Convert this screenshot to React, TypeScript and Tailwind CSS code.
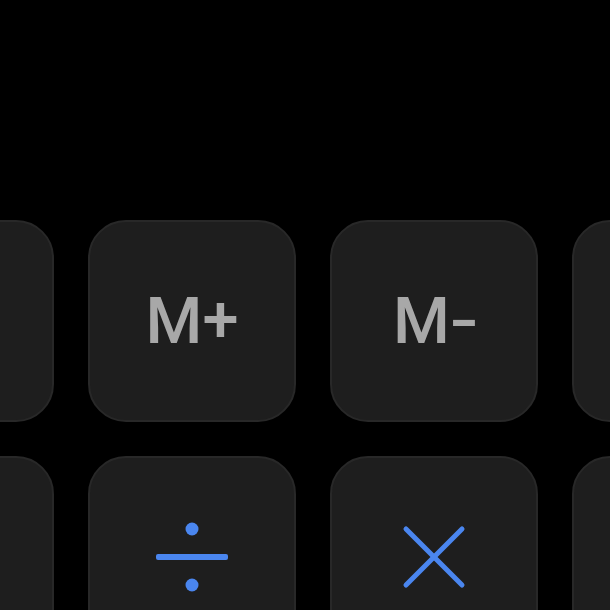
import React from 'react';

type Key = { id: string; content?: React.ReactNode };

const labelClass =
  "flex items-baseline text-[#a8a8a8] text-[65px] font-medium leading-none font-['Roboto','Liberation_Sans',sans-serif]";

const DivideIcon = () => (
  <svg width="76" height="70" viewBox="0 0 76 70" fill="#4a86ef">
    <circle cx="38" cy="7" r="6.5" />
    <rect x="2" y="32" width="72" height="6" rx="2" />
    <circle cx="38" cy="63" r="6.5" />
  </svg>
);

const TimesIcon = () => (
  <svg width="64" height="64" viewBox="0 0 64 64" stroke="#4a86ef" strokeWidth="5" strokeLinecap="round">
    <line x1="4" y1="4" x2="60" y2="60" />
    <line x1="60" y1="4" x2="4" y2="60" />
  </svg>
);

const rows: Key[][] = [
  [
    { id: 'mc' },
    {
      id: 'm-plus',
      content: (
        <span className={labelClass}>
          M<span className="relative -top-[2px]">+</span>
        </span>
      ),
    },
    {
      id: 'm-minus',
      content: (
        <span className={labelClass}>
          M<span className="ml-[3px] inline-block scale-x-[1.3]">-</span>
        </span>
      ),
    },
    { id: 'mr' },
  ],
  [
    { id: 'c' },
    { id: 'divide', content: <DivideIcon /> },
    { id: 'times', content: <TimesIcon /> },
    { id: 'back' },
  ],
];

const App = () => {
  return (
    <div className="w-[610px] h-[610px] bg-black overflow-hidden">
      <div className="flex flex-col gap-[34px] pt-[220px] -ml-[154px]">
        {rows.map((row, r) => (
          <div key={r} className="flex gap-[34px]">
            {row.map((key) => (
              <button
                key={key.id}
                className="shrink-0 w-[208px] h-[202px] rounded-[38px] bg-[#1e1e1e] border-2 border-[#282828] flex items-center justify-center"
              >
                {key.content}
              </button>
            ))}
          </div>
        ))}
      </div>
    </div>
  );
};

export default App;
